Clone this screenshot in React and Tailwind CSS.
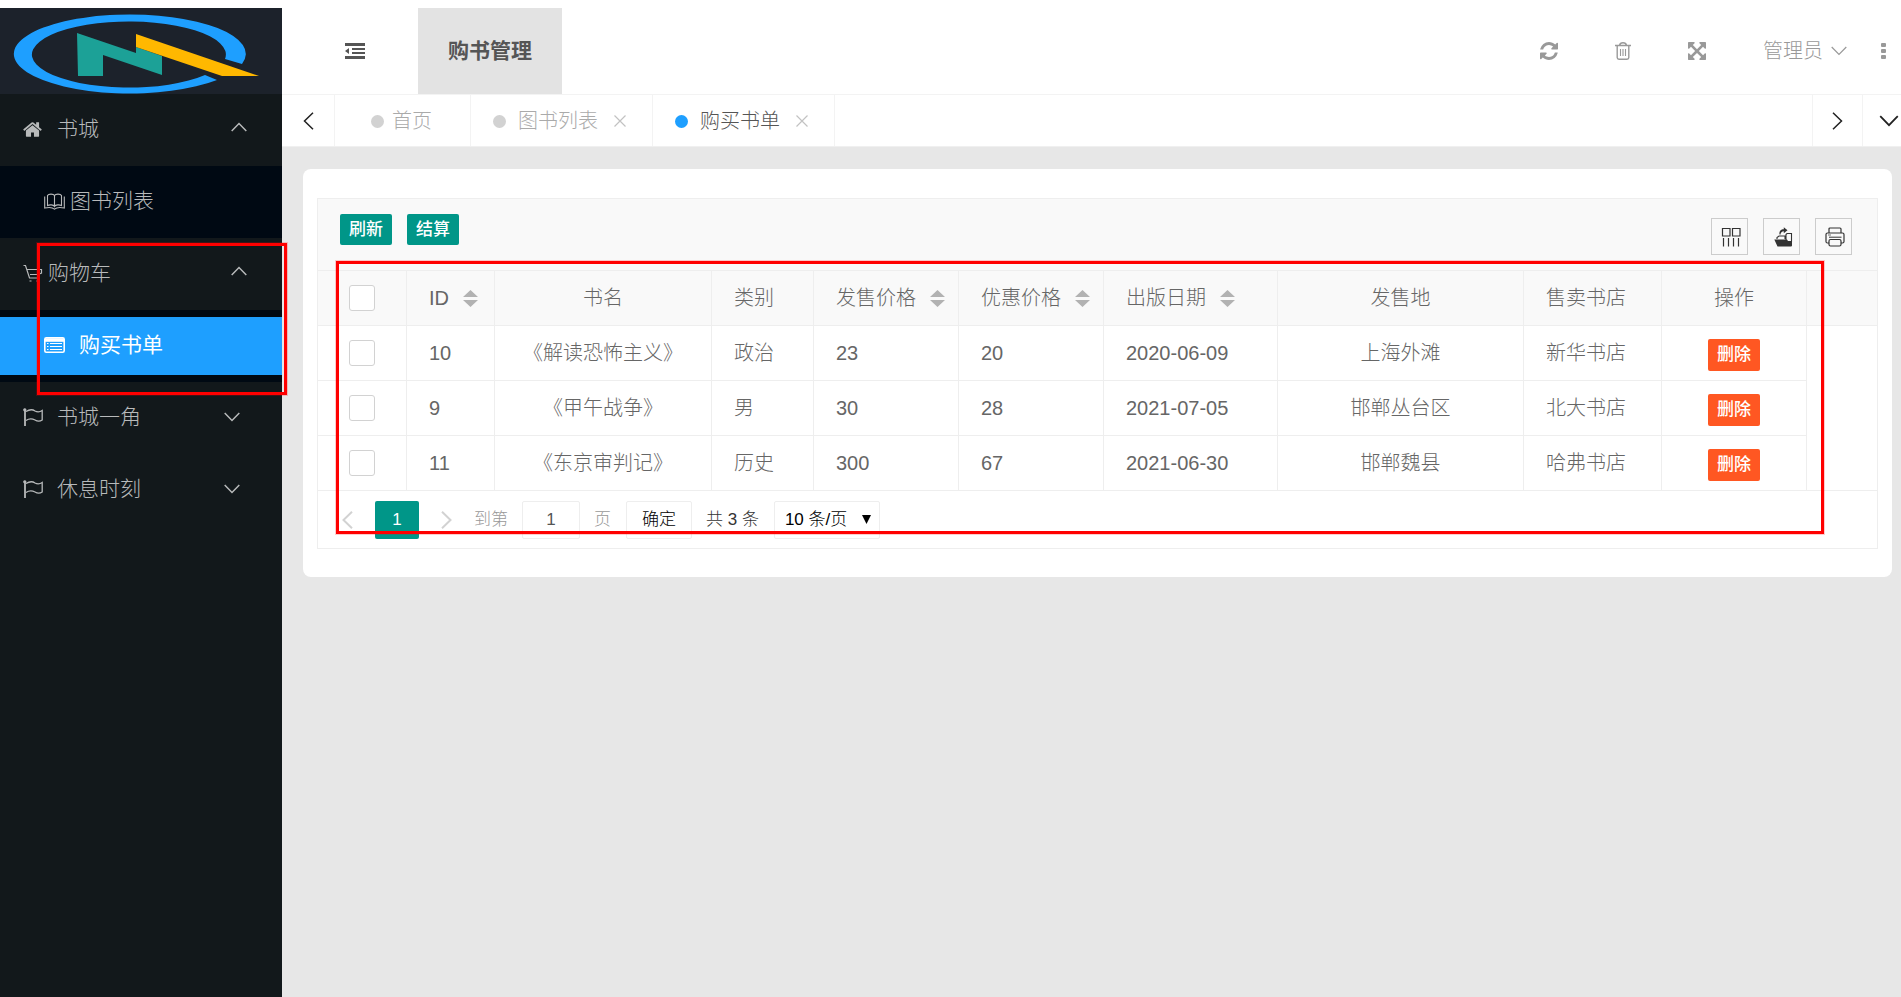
import { useState } from "react";

const menu = [
  { title: "书城", icon: HomeIcon, open: true, children: [{ title: "图书列表", icon: BookIcon }] },
  { title: "购物车", icon: CartIcon, open: true, tight: true, children: [{ title: "购买书单", icon: ListIcon, active: true }] },
  { title: "书城一角", icon: FlagIcon },
  { title: "休息时刻", icon: FlagIcon },
];

const columns = [
  { key: "id", title: "ID", width: "w-[88px]", sort: true },
  { key: "name", title: "书名", width: "w-[217px]", center: true },
  { key: "type", title: "类别", width: "w-[102px]" },
  { key: "price", title: "发售价格", width: "w-[145px]", sort: true },
  { key: "sale", title: "优惠价格", width: "w-[145px]", sort: true },
  { key: "date", title: "出版日期", width: "w-[174px]", sort: true },
  { key: "place", title: "发售地", width: "w-[246px]", center: true },
  { key: "shop", title: "售卖书店", width: "w-[138px]" },
];

const books = [
  { id: 10, name: "《解读恐怖主义》", type: "政治", price: 23, sale: 20, date: "2020-06-09", place: "上海外滩", shop: "新华书店" },
  { id: 9, name: "《甲午战争》", type: "男", price: 30, sale: 28, date: "2021-07-05", place: "邯郸丛台区", shop: "北大书店" },
  { id: 11, name: "《东京审判记》", type: "历史", price: 300, sale: 67, date: "2021-06-30", place: "邯郸魏县", shop: "哈弗书店" },
];

function Logo() {
  return (
    <svg viewBox="0 0 282 86" className="block h-[86px] w-[282px]" role="img" aria-label="logo">
      <path d="M217 72A116 39.5 0 1 1 242 56L225 51A97 33 0 1 0 205 67Z" fill="#1e9fff" />
      <path d="M77 25L136 45V39L162 48V67L103 47V68H78Z" fill="#1ca197" />
      <path d="M136 26L259 68H222L136 39Z" fill="#ffb800" />
    </svg>
  );
}

function HomeIcon() {
  return (
    <svg viewBox="0 240 1664 1310" className="h-[15px] w-[19px]" fill="currentColor">
      <path d="M1408 992v480q0 26-19 45t-45 19h-384v-384h-256v384h-384q-26 0-45-19t-19-45v-480q0-1 .5-3t.5-3l575-474 575 474q1 2 1 6zm223-69l-62 74q-8 9-21 11h-3q-13 0-21-7l-692-577-692 577q-12 8-24 7-13-2-21-11l-62-74q-8-10-7-23.5t11-21.5l719-599q32-26 76-26t76 26l244 204v-195q0-14 9-23t23-9h192q14 0 23 9t9 23v408l219 182q10 8 11 21.5t-7 23.5z" />
    </svg>
  );
}

function BookIcon() {
  return (
    <svg viewBox="0 0 21 17" className="h-[17px] w-[21px]" fill="none" stroke="currentColor" strokeWidth="1.1">
      <path d="M10.5 2.5C9.5.6 4.5.6 3.500 2.500V12.500C5.500 11.500 9.500 11.500 10.500 13.500C11.500 11.500 15.500 11.500 17.500 12.500V2.500C16.500.6 11.500.6 10.500 2.500V13.500" />
      <path d="M.7 3.500V15C4 14.300 8 13.800 10.500 16.200C13 13.800 17 14.300 20.300 15V3.500" />
    </svg>
  );
}

function CartIcon() {
  return (
    <svg viewBox="0 0 20 18" className="h-[18px] w-[20px]" fill="none" stroke="currentColor" strokeWidth="1.2">
      <path d="M.5 1.500H2.500L6.500 14H16M4.300 5.500H18.500V9L15 10.500H7" />
      <path d="M6.500 17H8.500M13.500 17H15.500" />
    </svg>
  );
}

function ListIcon() {
  return (
    <svg viewBox="0 0 21 16" className="h-[16px] w-[21px]" fill="none" stroke="currentColor">
      <rect x=".8" y=".8" width="19.4" height="14.4" rx="1.5" strokeWidth="1.6" />
      <path d="M1 3H20" strokeWidth="3.6" />
      <path d="M3 6.500H4.500M6 6.500H18M3 9.500H4.500M6 9.500H18M3 12.500H4.500M6 12.500H18" strokeWidth="1" />
    </svg>
  );
}

function FlagIcon() {
  return (
    <svg viewBox="0 0 20 18" className="h-[18px] w-[20px]" fill="none" stroke="currentColor" strokeWidth="1.3">
      <path d="M2 1V18" strokeWidth="1.8" />
      <circle cx="1.8" cy="1.8" r="1" fill="currentColor" />
      <path d="M3 3.500C7 1 10 1.500 12 3C14.500 4.300 17 4 19.200 2.500V12C17 13.500 14.500 13.500 12 12C9 10.500 6 10.500 3 12.500" />
    </svg>
  );
}

function Chevron({ d, box, className, stroke }) {
  return (
    <svg viewBox={box} className={className} fill="none" stroke="currentColor" strokeWidth={stroke || 1.5}>
      <path d={d} />
    </svg>
  );
}

const DownIcon = ({ className, stroke }) => <Chevron box="0 0 16 10" d="M.7 1L8 8.500L15.300 1" className={className} stroke={stroke} />;
const UpIcon = ({ className }) => <Chevron box="0 0 16 10" d="M.7 9L8 1.500L15.300 9" className={className} />;
const LeftIcon = ({ className, stroke }) => <Chevron box="0 0 11 18" d="M10 .8L1.500 9L10 17.200" className={className} stroke={stroke} />;
const RightIcon = ({ className, stroke }) => <Chevron box="0 0 11 18" d="M1 .8L9.500 9L1 17.200" className={className} stroke={stroke} />;

function ShrinkIcon() {
  return (
    <svg viewBox="0 0 20 16" className="h-4 w-5" fill="#555">
      <path d="M0 0H20V3H0ZM7 5H20V7H7ZM7 9H20V11H7ZM0 13H20V16H0ZM0 8L4 5V11Z" />
    </svg>
  );
}

function RefreshIcon() {
  return (
    <svg viewBox="0 0 1536 1536" className="h-[18px] w-[18px]" fill="currentColor">
      <path d="M1511 928q0 5-1 7-64 268-268 434.5t-478 166.5q-146 0-282.5-55t-243.5-157l-129 129q-19 19-45 19t-45-19-19-45v-448q0-26 19-45t45-19h448q26 0 45 19t19 45-19 45l-137 137q71 66 161 102t187 36q134 0 250-65t186-179q11-17 53-117 8-23 30-23h192q13 0 22.5 9.5t9.5 22.5zm25-800v448q0 26-19 45t-45 19h-448q-26 0-45-19t-19-45 19-45l138-138q-148-137-349-137-134 0-250 65t-186 179q-11 17-53 117-8 23-30 23h-199q-13 0-22.5-9.5t-9.5-22.5v-7q65-268 270-434.5t480-166.5q146 0 284 55.5t245 156.5l130-129q19-19 45-19t45 19 19 45z" />
    </svg>
  );
}

function TrashIcon() {
  return (
    <svg viewBox="0 0 16 18" className="h-[18px] w-4" fill="none" stroke="currentColor" strokeWidth="1.4">
      <path d="M0 3.500H16M4.500 3.500Q5 .8 8 .8Q11 .8 11.500 3.500M2.200 4V15.500Q2.200 17.200 4 17.200H12Q13.800 17.200 13.800 15.500V4" />
      <path d="M5.500 7V14M8 7V14M10.500 7V14" strokeWidth="1.1" />
    </svg>
  );
}

function FullIcon() {
  return (
    <svg viewBox="0 0 1536 1536" className="h-[18px] w-[18px]" fill="currentColor">
      <path d="M1283 413l-355 355 355 355 144-144q29-31 70-14 39 17 39 59v448q0 26-19 45t-45 19h-448q-42 0-59-40-17-39 14-69l144-144-355-355-355 355 144 144q31 30 14 69-17 40-59 40h-448q-26 0-45-19t-19-45v-448q0-42 40-59 39-17 69 14l144 144 355-355-355-355-144 144q-19 19-45 19-12 0-24-5-40-17-40-59v-448q0-26 19-45t45-19h448q42 0 59 40 17 39-14 69l-144 144 355 355 355-355-144-144q-31-30-14-69 17-40 59-40h448q26 0 45 19t19 45v448q0 42-39 59-13 5-25 5-26 0-45-19z" />
    </svg>
  );
}

function DotsIcon() {
  return (
    <svg viewBox="0 0 5 16" className="h-4 w-[5px]" fill="currentColor">
      <rect width="5" height="4" rx="1" />
      <rect y="6" width="5" height="4" rx="1" />
      <rect y="12" width="5" height="4" rx="1" />
    </svg>
  );
}

function ColumnsIcon() {
  return (
    <svg viewBox="0 0 20 20" className="h-5 w-5" fill="none" stroke="#333" strokeWidth="1.2">
      <path d="M1.500 1.500H9V9H1.500ZM11.500 1.500H19V9H11.500Z" />
      <path d="M2.500 11V19.500M7.500 11V19.500M12.500 11V19.500M17.500 11V19.500" />
    </svg>
  );
}

function ExportIcon() {
  return (
    <svg viewBox="0 0 19 20" className="h-5 w-[19px]" fill="#333">
      <path d="M.3 12.500H13L14 14H18V18.500Q18 19.500 17 19.500H3.500Z" />
      <path d="M3 12V10.500L5 9H11V12M12 14V7.500L13 6.500H17.500V15" fill="none" stroke="#333" strokeWidth="1.1" />
      <path d="M5.500 7.500C5 4 7 2.200 9.800 2.200V.3L13.500 3.300L9.800 6.200V4.200C8 4.200 6.500 5.500 6.500 7.500Z" />
    </svg>
  );
}

function PrintIcon() {
  return (
    <svg viewBox="0 0 20 20" className="h-5 w-5" fill="none" stroke="#333" strokeWidth="1.2">
      <path d="M4 6V2Q4 1 5 1H15Q16 1 16 2V6M4 16H2.500Q1 16 1 14.500V7.500Q1 6 2.500 6H17.500Q19 6 19 7.500V14.500Q19 16 17.500 16H16" />
      <path d="M5.500 12.500H14.500Q16 12.500 16 14V17.500Q16 19 14.500 19H5.500Q4 19 4 17.500V14Q4 12.500 5.500 12.500Z" />
      <path d="M4 10.200H16.500" strokeWidth="1" />
      <path d="M3 8H6" strokeWidth=".7" />
    </svg>
  );
}

function SortIcon() {
  return (
    <svg viewBox="0 0 15 17" className="h-[17px] w-[15px]" fill="#b2b2b2">
      <path d="M0 7L7.500 0L15 7ZM0 10H15L7.500 17Z" />
    </svg>
  );
}

function Sidebar() {
  return (
    <aside className="relative w-[282px] shrink-0 bg-[#12181b] text-[21px] text-[#b8babb]">
      <div className="bg-[#1c222b]">
        <Logo />
      </div>
      <nav>
        {menu.map((item) => (
          <div key={item.title}>
            <a href="#" className={"flex h-[72px] items-center pb-[2px] pl-[23px] " + (item.tight ? "gap-[5px]" : "gap-[14px]")}>
              <span className="flex w-5 shrink-0">
                <item.icon />
              </span>
              <span className="flex-1">{item.title}</span>
              {item.open ? <UpIcon className="mr-[35px] mb-1 h-[10px] w-4" /> : <DownIcon className="mr-[42px] h-[10px] w-4" />}
            </a>
            {item.children && (
              <div className="bg-[#000913] py-[7px]">
                {item.children.map((sub) => (
                  <a
                    key={sub.title}
                    href="#"
                    className={"flex h-[58px] items-center pb-[2px] pl-[44px] " + (sub.active ? "gap-[14px] bg-[#1e9fff] font-normal text-white" : "gap-[5px]")}
                  >
                    <sub.icon />
                    {sub.title}
                  </a>
                ))}
              </div>
            )}
          </div>
        ))}
      </nav>
      {/* highlight around the cart menu */}
      <div className="pointer-events-none absolute top-[235px] left-[37px] z-10 h-[152px] w-[250px] border-3 border-[#ff0000] ring-1 ring-[#ff0000]/20" />
    </aside>
  );
}

function Header() {
  return (
    <header className="flex h-[87px] items-stretch justify-between border-b border-[#f3f3f3] bg-white">
      <div className="flex pl-[36px]">
        <button aria-label="收起菜单" className="flex w-[74px] items-center justify-center">
          <ShrinkIcon />
        </button>
        <a href="#" className="ml-[26px] flex w-[144px] items-center justify-center bg-[#e3e3e3] text-[21px] font-bold text-[#555]">
          购书管理
        </a>
      </div>
      <div className="flex text-[20px] text-[#999]">
        <button aria-label="刷新页面" className="flex w-[74px] items-center justify-center"><RefreshIcon /></button>
        <button aria-label="清理" className="flex w-[74px] items-center justify-center"><TrashIcon /></button>
        <button aria-label="全屏" className="flex w-[74px] items-center justify-center"><FullIcon /></button>
        <button className="flex items-center gap-2 pr-[19px] pl-[29px]">
          管理员
          <DownIcon className="h-[10px] w-4" stroke={1.2} />
        </button>
        <button aria-label="更多" className="flex w-[35px] items-center justify-center"><DotsIcon /></button>
      </div>
    </header>
  );
}

function TabBar() {
  return (
    <div className="flex h-[52px] border-b border-[#f0f0f0] bg-white text-[20px] text-[#aaa]">
      <button aria-label="向左" className="flex w-[53px] items-center justify-center border-r border-[#f3f3f3] text-[#222]">
        <LeftIcon className="h-[18px] w-[11px]" />
      </button>
      <a href="#" className="flex items-center gap-2 border-r border-[#f3f3f3] pt-[1px] pr-[38px] pl-[36px]">
        <span className="h-[13px] w-[13px] rounded-full bg-[#d2d2d2]" />
        首页
      </a>
      <Tab title="图书列表" />
      <Tab title="购买书单" active />
      <div className="flex-1" />
      <button aria-label="向右" className="flex w-[50px] items-center justify-center border-l border-[#f3f3f3] text-[#222]">
        <RightIcon className="h-[18px] w-[11px]" />
      </button>
      <button aria-label="标签操作" className="flex w-[39px] items-center justify-end border-l border-[#f3f3f3] pr-[2px] text-[#222]">
        <DownIcon className="h-3 w-5" />
      </button>
    </div>
  );
}

function Tab({ title, active }) {
  return (
    <div className="flex items-center border-r border-[#f3f3f3] pt-[1px] pr-[26px] pl-[22px]">
      <a href="#" className={"flex items-center gap-3 " + (active ? "text-[#555]" : "")}>
        <span className={"h-[13px] w-[13px] rounded-full " + (active ? "bg-[#1e9fff]" : "bg-[#d2d2d2]")} />
        {title}
      </a>
      <button aria-label={"关闭" + title} className="ml-4 text-[#c2c2c2]">
        <svg viewBox="0 0 12 12" className="h-3 w-3" fill="none" stroke="currentColor" strokeWidth="1.2">
          <path d="M.5 .5L11.500 11.500M11.500 .5L.5 11.500" />
        </svg>
      </button>
    </div>
  );
}

function Toolbar() {
  return (
    <div className="flex h-[72px] items-start justify-between border-b border-[#eee] bg-[#f9f9f9] pr-[25px] pl-[22px]">
      <div className="flex gap-[15px] pt-[15px] text-[17px] font-medium text-white">
        <button className="h-[31px] w-[52px] rounded-[2px] bg-[#009688]">刷新</button>
        <button className="h-[31px] w-[52px] rounded-[2px] bg-[#009688]">结算</button>
      </div>
      <div className="flex gap-[15px] pt-[19px]">
        <button aria-label="筛选列" className="flex h-[37px] w-[37px] items-center justify-center border border-[#ccc] pl-[3px]"><ColumnsIcon /></button>
        <button aria-label="导出" className="flex h-[37px] w-[37px] items-center justify-center border border-[#ccc] pl-[3px]"><ExportIcon /></button>
        <button aria-label="打印" className="flex h-[37px] w-[37px] items-center justify-center border border-[#ccc] pl-[3px]"><PrintIcon /></button>
      </div>
    </div>
  );
}

function Check({ label, checked, onChange }) {
  return (
    <input
      type="checkbox"
      aria-label={label}
      checked={checked}
      onChange={onChange}
      className="block h-[26px] w-[26px] appearance-none rounded-[3px] border border-[#d2d2d2] bg-white checked:bg-[#5fb878]"
    />
  );
}

function BookTable() {
  const [picked, setPicked] = useState([]);
  const toggle = (id) => setPicked(picked.includes(id) ? picked.filter((p) => p !== id) : [...picked, id]);
  const all = picked.length === books.length;

  return (
    <table className="w-full table-fixed border-separate border-spacing-0 text-[20px] text-[#666]">
      <thead>
        <tr className="h-[55px] bg-[#f9f9f9]">
          <th className="w-[89px] border-r border-b border-[#eee] pl-[31px]">
            <Check label="全选" checked={all} onChange={() => setPicked(all ? [] : books.map((b) => b.id))} />
          </th>
          {columns.map((c) => (
            <th key={c.key} className={"border-r border-b border-[#eee] pl-[22px] font-light whitespace-nowrap " + c.width + (c.center ? " pr-[22px] text-center" : " text-left")}>
              {c.sort ? (
                <span className="flex items-center gap-[14px]">
                  {c.title}
                  <SortIcon />
                </span>
              ) : (
                c.title
              )}
            </th>
          ))}
          <th className="w-[145px] border-r border-b border-[#eee] font-light">操作</th>
          <td className="border-b border-[#eee]" />
        </tr>
      </thead>
      <tbody>
        {books.map((b, i) => (
          <tr key={b.id} className="h-[55px]">
            <td className="border-r border-b border-[#eee] pl-[31px]">
              <Check label={"选择" + b.name} checked={picked.includes(b.id)} onChange={() => toggle(b.id)} />
            </td>
            {columns.map((c) => (
              <td key={c.key} className={"border-r border-b border-[#eee] pl-[22px] whitespace-nowrap " + (c.center ? "pr-[22px] text-center" : "")}>
                {b[c.key]}
              </td>
            ))}
            <td className="border-r border-b border-[#eee] pt-[3px] text-center">
              <button className="mx-auto block h-8 w-[52px] rounded-[2px] bg-[#ff5722] text-[17px] font-medium text-white">删除</button>
            </td>
            <td className={i === books.length - 1 ? "border-b border-[#eee]" : ""} />
          </tr>
        ))}
      </tbody>
    </table>
  );
}

function Pager() {
  return (
    <div className="flex h-[57px] items-center pl-[24px] text-[17px] text-[#999]">
      <button aria-label="上一页" className="text-[#d2d2d2]"><LeftIcon className="h-[18px] w-[11px]" stroke={2} /></button>
      <button className="ml-[22px] h-[38px] w-[44px] rounded-[2px] bg-[#009688] text-white">1</button>
      <button aria-label="下一页" className="ml-[22px] text-[#d2d2d2]"><RightIcon className="h-[18px] w-[11px]" stroke={2} /></button>
      <label htmlFor="page" className="ml-[22px]">到第</label>
      <input id="page" defaultValue="1" className="mx-[14px] h-[38px] w-[58px] rounded-[2px] border border-[#eee] text-center text-[#555]" />
      页
      <button className="ml-[15px] h-[38px] w-[66px] rounded-[2px] border border-[#eee] text-black">确定</button>
      <span className="ml-[14px] text-[#333]">共 3 条</span>
      <div className="relative ml-[15px]">
        <select aria-label="每页条数" className="h-[38px] w-[106px] appearance-none rounded-[2px] border border-[#eee] pl-[10px] text-black">
          <option>10 条/页</option>
          <option>20 条/页</option>
        </select>
        <svg viewBox="0 0 9 9" className="pointer-events-none absolute top-[14px] right-[9px] h-[9px] w-[9px]" fill="#000">
          <path d="M0 0H9L4.500 9Z" />
        </svg>
      </div>
    </div>
  );
}

export default function App() {
  return (
    <div
      lang="zh-CN"
      className="flex min-h-screen overflow-x-hidden bg-white pt-2 leading-normal font-light [font-family:'Liberation_Sans','Noto_Sans_CJK_SC',sans-serif]"
    >
      <Sidebar />
      <div className="flex min-w-0 flex-1 flex-col">
        <Header />
        <TabBar />
        <main className="flex-1 bg-[#e7e7e7] pt-[22px] pr-[9px] pl-[21px]">
          <div className="rounded-lg bg-white px-[14px] pt-[29px] pb-[28px]">
            <div className="relative border border-[#eee]">
              <Toolbar />
              <BookTable />
              <Pager />
              {/* highlight around the order list */}
              <div className="pointer-events-none absolute top-[62px] right-[53px] bottom-[14px] left-[18px] border-3 border-[#ff0000] ring-1 ring-[#ff0000]/20" />
            </div>
          </div>
        </main>
      </div>
    </div>
  );
}
